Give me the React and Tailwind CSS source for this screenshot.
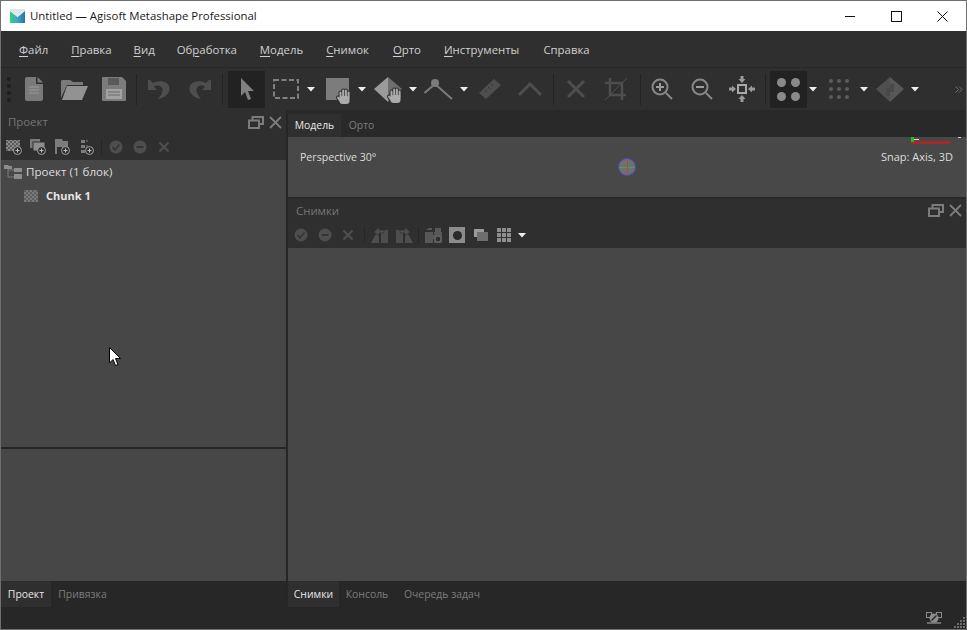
const FONT = "font-['Open_Sans','Noto_Sans',sans-serif]";

const MENU = [
  { before: "", key: "Ф", after: "айл", cls: "ml-[18px]" },
  { before: "", key: "П", after: "равка", cls: "ml-[23px]" },
  { before: "", key: "В", after: "ид", cls: "ml-[22px]" },
  { before: "Об", key: "р", after: "аботка", cls: "ml-[22px]" },
  { before: "", key: "М", after: "одель", cls: "ml-[23px]" },
  { before: "", key: "С", after: "нимок", cls: "ml-[23px]" },
  { before: "", key: "О", after: "рто", cls: "ml-[24px]" },
  { before: "", key: "И", after: "нструменты", cls: "ml-[23px]" },
  { before: "", key: "", after: "Справка", cls: "ml-[24px]" },
];

function Svg({ w, h, children, className = "" }) {
  return (
    <svg width={w} height={h} viewBox={`0 0 ${w} ${h}`} className={`shrink-0 overflow-visible ${className}`}>
      {children}
    </svg>
  );
}

function Slot({ w, children, className = "" }) {
  return <div className={`flex h-full items-center justify-center shrink-0 ${w} ${className}`}>{children}</div>;
}

function Sep() {
  return <div className="w-px h-[31px] bg-[#222222] shrink-0" />;
}

function Caret() {
  return (
    <svg width="8" height="5" viewBox="0 0 8 5" className="shrink-0">
      <path d="M0 0H8L4 4.500Z" fill="#eeeeee" />
    </svg>
  );
}

function Hand({ x = 0, y = 0 }) {
  const fingers = "M3.500 9V3.500M6.200 8V1.500M8.900 8V1.500M11.600 9V3.500M3 11.500L1 8.500";
  return (
    <g transform={`translate(${x} ${y})`}>
      <path d={fingers} stroke="#2f2f2f" strokeWidth="4" strokeLinecap="round" fill="none" />
      <rect x="1.500" y="6" width="12" height="10" rx="3.500" fill="#2f2f2f" />
      <path d={fingers} stroke="#ababab" strokeWidth="2" strokeLinecap="round" fill="none" />
      <rect x="2.500" y="7" width="10" height="8" rx="3" fill="#ababab" />
    </g>
  );
}

function Pyramid({ fillA, fillB, hand, steps }) {
  return (
    <Svg w={30} h={25}>
      <path d="M14 0 L0 12 L14 25 Z" fill={fillA} />
      <path d="M14 0 L28 12 L14 25 Z" fill={fillB} />
      {steps && <path d="M10 11H14V7H18V15H14V19H10Z" fill="#484848" />}
      {hand && <Hand x={14} y={11} />}
    </Svg>
  );
}

function MainToolbar() {
  return (
    <div className="flex h-[43px] items-center border-t border-[#272727] bg-[#2f2f2f] shrink-0">
      <Slot w="w-[16px]">
        <div className="flex flex-col gap-[3px]">
          {[0, 1, 2, 3].map((i) => (
            <div key={i} className="w-[4px] h-[4px] rounded-full bg-[#1e1e1e]" />
          ))}
        </div>
      </Slot>
      <Slot w="w-[34px]">
        <Svg w={18} h={24}>
          <path d="M2 0H11V7H18V22a2 2 0 0 1-2 2H2a2 2 0 0 1-2-2V2a2 2 0 0 1 2-2Z" fill="#7a7a7a" />
          <path d="M12.500 0L18 5.500H12.500Z" fill="#7a7a7a" />
          <path d="M4 10H14M4 13H14M4 16H14" stroke="#9a9a9a" strokeWidth="1" />
        </Svg>
      </Slot>
      <Slot w="w-[46px]">
        <Svg w={27} h={22}>
          <path d="M1 2H9L12 4H22V7H6L0 20V3Z" fill="#7a7a7a" />
          <path d="M6 8H27L21 22H1Z" fill="#929292" />
        </Svg>
      </Slot>
      <Slot w="w-[34px]">
        <Svg w={24} h={24}>
          <path d="M1 0H20L24 4V23a1 1 0 0 1-1 1H1a1 1 0 0 1-1-1V1a1 1 0 0 1 1-1Z" fill="#7c7c7c" />
          <rect x="6" y="1" width="11" height="7" fill="#5a5a5a" />
          <rect x="4" y="12" width="16" height="10" fill="#a2a2a2" />
          <path d="M6 15H18M6 18H18" stroke="#6a6a6a" />
        </Svg>
      </Slot>
      <div className="ml-[5px]"><Sep /></div>
      <Slot w="w-[44px]">
        <Svg w={22} h={22}>
          <path d="M0 2V12H9L6 9C8 7 12 7 14 10C15.500 12.500 13.500 17 10 21C17 20 22 15 21.500 10C21 4 12 1 5 5L2 2Z" fill="#4e4e4e" />
        </Svg>
      </Slot>
      <Slot w="w-[37px]">
        <Svg w={22} h={22}>
          <path d="M22 2V12H13L16 9C14 7 10 7 8 10C6.500 12.500 8.500 17 12 21C5 20 0 15 0.500 10C1 4 10 1 17 5L20 2Z" fill="#4e4e4e" />
        </Svg>
      </Slot>
      <div className="ml-[4px]"><Sep /></div>
      <div className="ml-[5px] flex w-[37px] h-[37px] items-center justify-center bg-[#222222] shrink-0">
        <Svg w={14} h={22}>
          <path d="M1 0L14 13H8L11 21L8 22L5 14L1 18Z" fill="#808080" />
        </Svg>
      </div>
      <Slot w="w-[42px]">
        <Svg w={26} h={20}>
          <rect x="1" y="1" width="24" height="18" fill="none" stroke="#808080" strokeWidth="2" strokeDasharray="5 2.500" />
        </Svg>
      </Slot>
      <Caret />
      <div className="ml-[11px] shrink-0">
        <Svg w={28} h={22}>
          <rect x="0" y="0" width="23" height="22" fill="#7c7c7c" />
          <Hand x={11} y={11} />
        </Svg>
      </div>
      <div className="ml-[4px]"><Caret /></div>
      <div className="ml-[8px] shrink-0"><Pyramid fillA="#9a9a9a" fillB="#6e6e6e" hand /></div>
      <div className="ml-[5px]"><Caret /></div>
      <div className="ml-[7px] shrink-0">
        <Svg w={29} h={22}>
          <circle cx="11" cy="5" r="4" fill="#7c7c7c" />
          <path d="M0.500 15L11 6L28 21" fill="none" stroke="#7c7c7c" strokeWidth="2" />
        </Svg>
      </div>
      <div className="ml-[7px]"><Caret /></div>
      <Slot w="w-[43px]">
        <Svg w={22} h={20}>
          <path d="M15 0L22 6L7 20L0 14Z" fill="#4e4e4e" />
          <path d="M12 5L14 7M9 8L11 10M6 11L8 13" stroke="#323232" />
        </Svg>
      </Slot>
      <Slot w="w-[38px]">
        <Svg w={24} h={14}>
          <path d="M1 13L12 2L23 13" fill="none" stroke="#4e4e4e" strokeWidth="3" />
        </Svg>
      </Slot>
      <div className="ml-[4px]"><Sep /></div>
      <Slot w="w-[44px]">
        <Svg w={20} h={20}>
          <path d="M2 2L18 18M18 2L2 18" stroke="#4e4e4e" strokeWidth="3" />
        </Svg>
      </Slot>
      <Slot w="w-[36px]">
        <Svg w={24} h={24}>
          <path d="M6 1V18H22M1 6H18V23" fill="none" stroke="#4e4e4e" strokeWidth="2.500" />
          <path d="M1 23L23 1" stroke="#4e4e4e" strokeWidth="1" />
        </Svg>
      </Slot>
      <div className="ml-[6px]"><Sep /></div>
      <Slot w="w-[41px]">
        <Svg w={22} h={22}>
          <circle cx="9" cy="9" r="7.500" fill="none" stroke="#888888" strokeWidth="2" />
          <path d="M15 15L21 21" stroke="#888888" strokeWidth="2" />
          <path d="M5 9H13M9 5V13" stroke="#9c9c9c" strokeWidth="2" />
        </Svg>
      </Slot>
      <Slot w="w-[39px]">
        <Svg w={22} h={22}>
          <circle cx="9" cy="9" r="7.500" fill="none" stroke="#888888" strokeWidth="2" />
          <path d="M15 15L21 21" stroke="#888888" strokeWidth="2" />
          <path d="M5 9H13" stroke="#9c9c9c" strokeWidth="2" />
        </Svg>
      </Slot>
      <Slot w="w-[42px]">
        <Svg w={26} h={26}>
          <rect x="9" y="9" width="8" height="8" fill="none" stroke="#a8a8a8" strokeWidth="2" />
          <path d="M13 7L9.500 3H11.500V0H14.500V3H16.500ZM13 19L9.500 23H11.500V26H14.500V23H16.500ZM7 13L3 9.500V11.500H0V14.500H3V16.500ZM19 13L23 9.500V11.500H26V14.500H23V16.500Z" fill="#9a9a9a" />
        </Svg>
      </Slot>
      <div className="ml-[2px]"><Sep /></div>
      <div className="ml-[4px] flex w-[37px] h-[37px] items-center justify-center bg-[#222222] shrink-0">
        <div className="grid grid-cols-2 gap-x-[5px] gap-y-[5px]">
          {[0, 1, 2, 3].map((i) => (
            <div key={i} className="w-[9px] h-[9px] rounded-full bg-[#8a8a8a]" />
          ))}
        </div>
      </div>
      <div className="ml-[2px]"><Caret /></div>
      <div className="ml-[12px] grid grid-cols-3 gap-x-[4px] gap-y-[4px] shrink-0">
        {[0, 1, 2, 3, 4, 5, 6, 7, 8].map((i) => (
          <div key={i} className="w-[4px] h-[4px] rounded-full bg-[#5c5c5c]" />
        ))}
      </div>
      <div className="ml-[11px]"><Caret /></div>
      <div className="ml-[8px] shrink-0"><Pyramid fillA="#4f4f4f" fillB="#575757" steps /></div>
      <div className="ml-[5px]"><Caret /></div>
      <div className="ml-[36px] shrink-0">
        <Svg w={8} h={7}>
          <path d="M0.500 0.500L3.500 3.500L0.500 6.500M4 0.500L7 3.500L4 6.500" fill="none" stroke="#6e6e6e" />
        </Svg>
      </div>
    </div>
  );
}

function RestoreClose() {
  return (
    <div className="flex items-center gap-[5px]">
      <Svg w={16} h={13}>
        <path d="M4.500 4V1H15V8H11.500M1 4.500H11V12H1Z" fill="none" stroke="#7c7c7c" strokeWidth="2" />
      </Svg>
      <Svg w={13} h={13}>
        <path d="M1 1L12 12M12 1L1 12" stroke="#7c7c7c" strokeWidth="1.800" />
      </Svg>
    </div>
  );
}

function Checker() {
  return (
    <div className="w-[14px] h-[12px] bg-[repeating-conic-gradient(#7a7a7a_0_25%,#5e5e5e_0_50%)] bg-[length:4px_4px]" />
  );
}

function Plus() {
  return (
    <g>
      <circle cx="11.500" cy="11.500" r="4" fill="#2f2f2f" stroke="#a0a0a0" />
      <path d="M9.500 11.500H13.500M11.500 9.500V13.500" stroke="#c0c0c0" />
    </g>
  );
}

function CheckCircle() {
  return (
    <Svg w={14} h={14}>
      <circle cx="7" cy="7" r="6.500" fill="#4e4e4e" />
      <path d="M3.500 7L6 10L10.500 4.500" fill="none" stroke="#343434" strokeWidth="1.500" />
    </Svg>
  );
}

function MinusCircle() {
  return (
    <Svg w={14} h={14}>
      <circle cx="7" cy="7" r="6.500" fill="#4e4e4e" />
      <path d="M3.500 7H10.500" stroke="#343434" strokeWidth="2" />
    </Svg>
  );
}

function SmallX() {
  return (
    <Svg w={12} h={12}>
      <path d="M1.500 1.500L10.500 10.500M10.500 1.500L1.500 10.500" stroke="#4e4e4e" strokeWidth="2.200" />
    </Svg>
  );
}

function ProjectToolbar() {
  return (
    <div className="flex h-[26px] items-center bg-[#2f2f2f] pl-[5px]">
      <Svg w={16} h={16}>
        <defs>
          <pattern id="chk" width="4" height="4" patternUnits="userSpaceOnUse">
            <rect width="4" height="4" fill="#5c5c5c" />
            <rect width="2" height="2" fill="#8a8a8a" />
            <rect x="2" y="2" width="2" height="2" fill="#8a8a8a" />
          </pattern>
        </defs>
        <rect x="0" y="1" width="14" height="11" fill="url(#chk)" />
        <Plus />
      </Svg>
      <div className="ml-[8px] shrink-0">
        <Svg w={16} h={16}>
          <rect x="0" y="0" width="10" height="9" fill="#7a7a7a" />
          <rect x="3" y="3" width="12" height="9" fill="#8e8e8e" stroke="#2f2f2f" />
          <Plus />
        </Svg>
      </div>
      <div className="ml-[8px] shrink-0">
        <Svg w={16} h={16}>
          <path d="M1 0H8L9 2H14V8H3V15H1Z" fill="#7c7c7c" />
          <Plus />
        </Svg>
      </div>
      <div className="ml-[10px] shrink-0">
        <Svg w={16} h={16}>
          <path d="M1 1H5V4H1ZM1 6H5V9H1ZM1 11H5V14H1Z" fill="#7c7c7c" />
          <path d="M6 2H8M6 7H8" stroke="#7c7c7c" />
          <g transform="translate(-2 0)"><Plus /></g>
        </Svg>
      </div>
      <div className="ml-[5px] mr-[7px] w-px h-[16px] bg-[#262626]" />
      <CheckCircle />
      <div className="ml-[10px]"><MinusCircle /></div>
      <div className="ml-[11px]"><SmallX /></div>
    </div>
  );
}

function PhotosToolbar() {
  return (
    <div className="flex h-[26px] items-center bg-[#2f2f2f] pl-[6px]">
      <CheckCircle />
      <div className="ml-[10px]"><MinusCircle /></div>
      <div className="ml-[10px]"><SmallX /></div>
      <div className="ml-[10px] mr-[6px] w-px h-[16px] bg-[#262626]" />
      <Svg w={18} h={16}>
        <path d="M0 16L6 5H8V16ZM10 3H17V16H10Z" fill="#4e4e4e" />
        <path d="M3 5L8 0V3H13V6H8V9Z" fill="#4e4e4e" stroke="#2f2f2f" strokeWidth="0.600" />
      </Svg>
      <div className="ml-[6px] shrink-0">
        <Svg w={18} h={16}>
          <path d="M18 16L12 5H10V16ZM8 3H1V16H8Z" fill="#4e4e4e" />
          <path d="M15 5L10 0V3H5V6H10V9Z" fill="#4e4e4e" stroke="#2f2f2f" strokeWidth="0.600" />
        </Svg>
      </div>
      <div className="ml-[5px] mr-[6px] w-px h-[16px] bg-[#262626]" />
      <Svg w={17} h={16}>
        <path d="M1 3H7V1H4ZM10 1H16V5H10ZM0 5H8V16H0ZM9 5H17V16H9ZM8 8H9V12H8Z" fill="#585858" />
        <circle cx="13" cy="12" r="3" fill="#2f2f2f" stroke="#6a6a6a" />
      </Svg>
      <div className="ml-[7px] flex w-[16px] h-[16px] items-center justify-center bg-[#8c8c8c] shrink-0">
        <div className="w-[9px] h-[9px] rounded-full bg-[#2a2a2a]" />
      </div>
      <div className="ml-[9px] shrink-0">
        <Svg w={14} h={14}>
          <rect x="0" y="1" width="10" height="8" fill="#9a9a9a" />
          <rect x="3" y="4" width="11" height="9" fill="#6e6e6e" />
        </Svg>
      </div>
      <div className="ml-[9px] grid grid-cols-3 gap-px shrink-0">
        {[0, 1, 2, 3, 4, 5, 6, 7, 8].map((i) => (
          <div key={i} className="w-[4px] h-[4px] bg-[#8e8e8e]" />
        ))}
      </div>
      <div className="ml-[7px]"><Caret /></div>
    </div>
  );
}

function BottomTabs({ items, widths }) {
  return (
    <div className="flex h-[26px] text-[10.4px] leading-[26px]">
      {items.map((t, i) => (
        <div
          key={t}
          className={`${widths[i]} text-center ${i === 0 ? "bg-[#2f2f2f] text-[#e8e8e8]" : "text-[#7d7d7d]"}`}
        >
          {t}
        </div>
      ))}
    </div>
  );
}

function ProjectPanel() {
  return (
    <div className="flex flex-col w-[285px] shrink-0">
      <div className="flex h-[24px] items-center justify-between bg-[#2f2f2f] pl-[7px] pr-[4px]">
        <span className="text-[11.4px] text-[#757575]">Проект</span>
        <RestoreClose />
      </div>
      <ProjectToolbar />
      <div className="h-[287px] bg-[#474747] text-[11.6px]">
        <div className="flex h-[24px] items-center pl-[3px]">
          <Svg w={19} h={16}>
            <path d="M0 1H4L5 2H8V5H0ZM10 4H18V8H10ZM10 10H18V15H10Z" fill="#8c8c8c" />
            <path d="M4 5V13H10M4 6H10" fill="none" stroke="#7a7a7a" />
          </Svg>
          <span className="ml-[3px] text-[#dddddd]">Проект (1 блок)</span>
        </div>
        <div className="flex h-[24px] items-center pl-[23px]">
          <Checker />
          <span className="ml-[8px] text-[11px] font-bold text-[#e8e8e8]">Chunk 1</span>
        </div>
      </div>
      <div className="h-[2px] bg-[#262626]" />
      <div className="flex-1 bg-[#474747]" />
      <div className="bg-[#272727]">
        <BottomTabs items={["Проект", "Привязка"]} widths={["w-[50px]", "w-[63px]"]} />
      </div>
    </div>
  );
}

function ModelPanel() {
  return (
    <>
      <div className="flex h-[23px] bg-[#292929] text-[10.4px] leading-[23px]">
        <div className="w-[53px] bg-[#2f2f2f] text-center text-[#e8e8e8]">Модель</div>
        <div className="w-[41px] text-center text-[#7d7d7d]">Орто</div>
      </div>
      <div className="relative flex h-[60px] justify-between bg-[#484848] pl-[12px] pr-[13px] pt-[12px] text-[10.6px] leading-[16px] text-[#dddddd]">
        <span>Perspective 30°</span>
        <span className="text-[11px]">Snap: Axis, 3D</span>
        <div className="absolute left-[330px] top-[21px] w-[18px] h-[18px] rounded-full border border-[#4a4ac0] bg-[#707070]">
          <div className="absolute left-0 right-0 top-[8px] h-px bg-[#4ea04e]" />
          <div className="absolute top-0 bottom-0 left-[8px] w-px bg-[#a05050]" />
        </div>
        <div className="absolute left-[623px] top-[4px] w-[40px] h-[3px] bg-[#a32a2a]" />
        <div className="absolute left-[623px] top-0 w-[3px] h-[5px] bg-[#1fc01f]" />
        <div className="absolute left-[626px] top-[2px] w-[5px] h-px bg-[#e0e0e0]" />
        <div className="absolute left-[670px] top-0 w-[3px] h-[2px] border-t border-[#d0d0d0]" />
      </div>
    </>
  );
}

export default function App() {
  return (
    <div className={`flex flex-col w-[967px] h-[630px] overflow-hidden border border-[#6f6f6f] bg-[#2f2f2f] ${FONT}`}>
      <div className="flex h-[30px] items-center bg-white shrink-0">
        <Svg w={15} h={15} className="ml-[9px]">
          <defs>
            <linearGradient id="logo" x1="0" x2="1" y1="0" y2="0">
              <stop offset="0" stopColor="#38d07a" />
              <stop offset="0.5" stopColor="#3aa8c8" />
              <stop offset="1" stopColor="#2e6f9e" />
            </linearGradient>
          </defs>
          <path d="M0 2L7.500 8L15 2V14H0Z" fill="url(#logo)" />
          <path d="M0 0H15V1.500L7.500 7.500L0 1.500Z" fill="#dfe5e8" />
        </Svg>
        <span className="ml-[5px] text-[11.4px] text-[#1a1a1a]">Untitled — Agisoft Metashape Professional</span>
        <div className="ml-auto flex items-center">
          <Svg w={11} h={11} className="mr-[35px]">
            <path d="M0 5.500H10" stroke="#111111" />
          </Svg>
          <Svg w={11} h={11} className="mr-[35px]">
            <rect x="0.500" y="0.500" width="10" height="10" fill="none" stroke="#111111" />
          </Svg>
          <Svg w={11} h={11} className="mr-[18px]">
            <path d="M0.500 0.500L10.500 10.500M10.500 0.500L0.500 10.500" stroke="#111111" />
          </Svg>
        </div>
      </div>

      <div className="flex h-[36px] items-center pt-px text-[11.4px] text-[#cfcfcf] shrink-0">
        {MENU.map((m) => (
          <span key={m.after} className={m.cls}>
            {m.before}
            {m.key && <span className="underline underline-offset-2">{m.key}</span>}
            {m.after}
          </span>
        ))}
      </div>

      <MainToolbar />

      <div className="flex flex-1 min-h-0 gap-[2px] bg-[#262626]">
        <ProjectPanel />
        <div className="flex flex-col flex-1 min-w-0">
          <div className="h-[4px] bg-[#292929]" />
          <ModelPanel />
          <div className="h-[2px] bg-[#2a2a2a]" />
          <div className="flex h-[23px] items-center justify-between bg-[#2f2f2f] pl-[8px] pr-[4px]">
            <span className="text-[11.4px] text-[#757575]">Снимки</span>
            <RestoreClose />
          </div>
          <PhotosToolbar />
          <div className="flex-1 bg-[#474747]" />
          <div className="bg-[#272727]">
            <BottomTabs
              items={["Снимки", "Консоль", "Очередь задач"]}
              widths={["w-[51px]", "w-[56px]", "w-[94px]"]}
            />
          </div>
        </div>
      </div>

      <div className="flex h-[22px] items-center justify-end bg-[#272727] shrink-0">
        <Svg w={16} h={12} className="mr-[11px]">
          <rect x="0.500" y="0.500" width="5" height="5" fill="none" stroke="#8a8a8a" />
          <rect x="10.500" y="0.500" width="5" height="5" fill="none" stroke="#8a8a8a" />
          <rect x="1" y="10" width="14" height="2" fill="#6e6e6e" />
          <circle cx="8" cy="6" r="4.500" fill="#8e8e8e" />
          <path d="M5.500 8.500L10.500 3.500" stroke="#272727" strokeWidth="1.500" />
        </Svg>
        <Svg w={12} h={12} className="mr-px mt-[10px]">
          <path
            d="M10 0h2v2h-2zM7 3h2v2H7zM10 3h2v2h-2zM4 6h2v2H4zM7 6h2v2H7zM10 6h2v2h-2zM1 9h2v2H1zM4 9h2v2H4zM7 9h2v2H7zM10 9h2v2h-2z"
            fill="#6e6e6e"
          />
        </Svg>
      </div>

      <div className="absolute left-[109px] top-[347px]">
        <Svg w={13} h={20}>
          <path d="M0.500 0.500V16L4 12.500L6.500 18.500L9 17.500L6.500 11.500H11.500Z" fill="#ffffff" stroke="#000000" />
        </Svg>
      </div>
    </div>
  );
}
